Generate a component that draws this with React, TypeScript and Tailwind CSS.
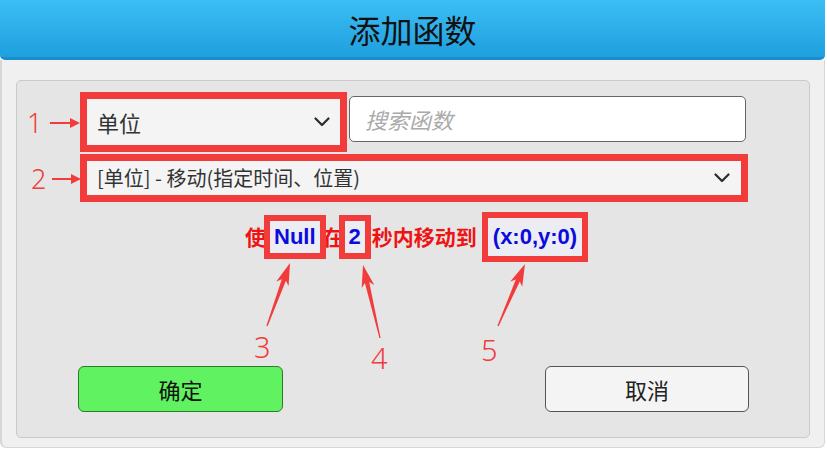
import React from 'react'

const RED = '#f23b3b'

function Chevron() {
  return (
    <svg width="16" height="10" viewBox="0 0 16 10" fill="none" aria-hidden="true">
      <path d="M1.5 1.5 L8 8 L14.5 1.5" stroke="#2b2b2b" strokeWidth="2.2" strokeLinecap="round" strokeLinejoin="round" />
    </svg>
  )
}

function SmallArrow({ width }: { width: number }) {
  return (
    <svg width={width} height="12" viewBox={`0 0 ${width} 12`} aria-hidden="true">
      <line x1="0" y1="6" x2={width - 8} y2="6" stroke={RED} strokeWidth="2" />
      <polygon points={`${width - 10},1 ${width},6 ${width - 10},11`} fill={RED} />
    </svg>
  )
}

// tapered annotation arrow, tail -> tip
function arrowPoints(x1: number, y1: number, x2: number, y2: number) {
  const dx = x2 - x1
  const dy = y2 - y1
  const len = Math.hypot(dx, dy)
  const ux = dx / len
  const uy = dy / len
  const nx = -uy
  const ny = ux
  const head = 22
  const bx = x2 - ux * head
  const by = y2 - uy * head
  const p = (x: number, y: number, w: number) => `${(x + nx * w).toFixed(1)},${(y + ny * w).toFixed(1)}`
  return [
    p(x1, y1, 0.6),
    p(bx + ux * 4, by + uy * 4, 2.2),
    p(bx, by, 6.5),
    `${x2},${y2}`,
    p(bx, by, -6.5),
    p(bx + ux * 4, by + uy * 4, -2.2),
    p(x1, y1, -0.6),
  ].join(' ')
}

const callouts = [
  { n: '3', tail: [267, 326], tip: [290, 263], lx: 263, ly: 347 },
  { n: '4', tail: [380, 338], tip: [363, 265], lx: 380, ly: 358 },
  { n: '5', tail: [498, 326], tip: [525, 264], lx: 490, ly: 350 },
]

function Value({ children, tall }: { children: React.ReactNode; tall?: boolean }) {
  return (
    <span
      className={`relative flex items-center justify-center bg-[#ececf3] text-[22px] font-bold leading-none text-[#0b0bdc] ${tall ? 'h-[38px] px-[5px]' : 'h-[32px] px-[4px]'}`}
      style={{ fontFamily: '"Liberation Sans", Arial, sans-serif' }}
    >
      {children}
      <span className="pointer-events-none absolute -inset-[6px] border-[6px] border-[#f23b3b]" />
    </span>
  )
}

export default function App() {
  return (
    <div
      className="relative h-[451px] w-[827px] overflow-hidden bg-white text-[#222]"
      style={{ fontFamily: '"Noto Sans CJK SC", "Noto Sans", sans-serif' }}
    >
      <div className="flex h-[448px] w-[825px] flex-col">
        {/* Title bar */}
        <div className="flex h-[60px] items-center justify-center rounded-b-[5px] border-b-[3px] border-[#1a8dcc] bg-linear-to-b from-[#3bbef4] to-[#1e9fdf]">
          <span className="text-[32px] leading-none text-[#111]">添加函数</span>
        </div>

        <div className="flex flex-1 flex-col rounded-b-[6px] border-b border-l-2 border-r border-[#d6d6d6] bg-[#f0f0f0] px-[14px] pb-[9px] pt-[20px]">
          <div className="flex flex-1 flex-col rounded-[5px] border border-[#c9c9c9] bg-[#e5e5e5]">
            {/* Row 1: category + search */}
            <div className="mt-[11px] flex items-start">
              <div className="flex h-[60px] w-[63px] items-center pl-[10px]">
                <span className="text-[27px] font-light leading-none text-[#f23b3b]" style={{ fontFamily: '"Noto Sans", sans-serif' }}>1</span>
                <span className="ml-[8px] mt-[2px] flex"><SmallArrow width={30} /></span>
              </div>
              <div className="h-[60px] w-[267px] border-[7px] border-[#f23b3b]">
                <div className="flex h-full items-center justify-between bg-[#f4f4f4] pl-[10px] pr-[10px]">
                  <span className="text-[22px] leading-none text-[#333]">单位</span>
                  <Chevron />
                </div>
              </div>
              <div className="ml-[2px] mt-[4px] flex h-[46px] w-[397px] items-center rounded-[5px] border border-[#666] bg-white pl-[15px]">
                <span className="text-[22px] italic leading-none text-[#aaa]">搜索函数</span>
              </div>
            </div>

            {/* Row 2: function select */}
            <div className="mt-[2px] flex items-start">
              <div className="flex h-[48px] w-[63px] items-center pl-[14px]">
                <span className="text-[27px] font-light leading-none text-[#f23b3b]" style={{ fontFamily: '"Noto Sans", sans-serif' }}>2</span>
                <span className="ml-[6px] mt-[2px] flex"><SmallArrow width={29} /></span>
              </div>
              <div className="h-[48px] w-[668px] border-[7px] border-[#f23b3b]">
                <div className="flex h-full items-center justify-between bg-[#f4f4f4] pl-[10px] pr-[11px]">
                  <span className="text-[20px] leading-none text-[#333]">[单位] - 移动(指定时间、位置)</span>
                  <Chevron />
                </div>
              </div>
            </div>

            {/* Sentence preview */}
            <div className="mt-[10px] flex h-[50px] items-center pl-[228px] text-[21px] font-bold text-[#ee1414]">
              <span>使</span>
              <span className="ml-[4px] flex"><Value>Null</Value></span>
              <span className="ml-[3px]">在</span>
              <span className="ml-[1px] flex"><Value>2</Value></span>
              <span className="ml-[7px]">秒内移动到</span>
              <span className="ml-[11px] flex"><Value tall>(x:0,y:0)</Value></span>
            </div>

            {/* Buttons */}
            <div className="mt-[104px] flex items-start pl-[61px]">
              <button className="flex h-[46px] w-[205px] items-center justify-center rounded-[6px] border border-[#2d7a2d] bg-[#60f260] text-[22px] leading-none text-[#111]">
                确定
              </button>
              <button className="ml-[262px] flex h-[46px] w-[204px] items-center justify-center rounded-[6px] border border-[#555] bg-[#f4f4f4] text-[22px] leading-none text-[#222]">
                取消
              </button>
            </div>
          </div>
        </div>
      </div>

      {/* Annotation arrows */}
      <svg className="pointer-events-none absolute left-0 top-0" width="827" height="451" aria-hidden="true">
        {callouts.map((c) => (
          <polygon key={c.n} points={arrowPoints(c.tail[0], c.tail[1], c.tip[0], c.tip[1])} fill={RED} />
        ))}
      </svg>
      {callouts.map((c) => (
        <span
          key={c.n}
          className="pointer-events-none absolute text-[29px] font-light leading-none text-[#f23b3b]"
          style={{ left: c.lx - 9, top: c.ly - 15, fontFamily: '"Noto Sans", sans-serif' }}
        >
          {c.n}
        </span>
      ))}
    </div>
  )
}
